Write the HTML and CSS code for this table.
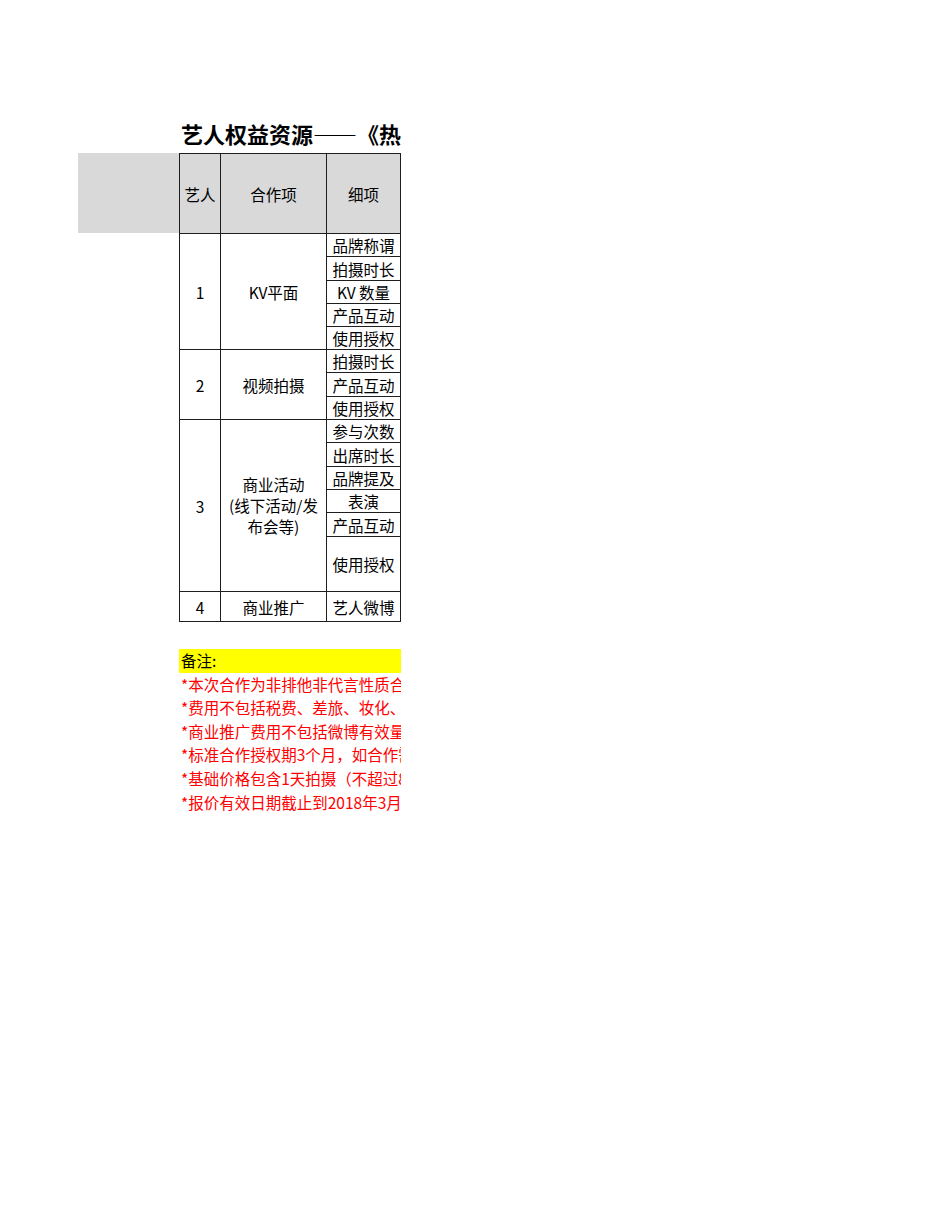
FILE: index.html
```html
<!DOCTYPE html>
<html lang="zh-CN">
<head>
<meta charset="utf-8">
<title>艺人权益资源</title>
<link rel="stylesheet" href="styles.css">
</head>
<body>
<div class="sheet">
  <div class="title">艺人权益资源——《热血街舞团》</div>
  <div class="sheet-row">
    <div class="gray-block"></div>
    <div class="grid">
      <div class="cell head">艺人</div>
      <div class="cell head">合作项</div>
      <div class="cell head">细项</div>

      <div class="cell span-a">1</div>
      <div class="cell span-a">KV平面</div>
      <div class="cell">品牌称谓</div>
      <div class="cell">拍摄时长</div>
      <div class="cell">KV 数量</div>
      <div class="cell">产品互动</div>
      <div class="cell">使用授权</div>

      <div class="cell span-b">2</div>
      <div class="cell span-b">视频拍摄</div>
      <div class="cell">拍摄时长</div>
      <div class="cell">产品互动</div>
      <div class="cell">使用授权</div>

      <div class="cell span-c">3</div>
      <div class="cell span-c multi">商业活动<br>(线下活动/发<br>布会等)</div>
      <div class="cell">参与次数</div>
      <div class="cell">出席时长</div>
      <div class="cell">品牌提及</div>
      <div class="cell">表演</div>
      <div class="cell">产品互动</div>
      <div class="cell">使用授权</div>

      <div class="cell">4</div>
      <div class="cell">商业推广</div>
      <div class="cell">艺人微博</div>
    </div>
  </div>
  <div class="notes">
    <div class="note-head">备注:</div>
    <div class="note">*本次合作为非排他非代言性质合作，不涉及品类独家</div>
    <div class="note">*费用不包括税费、差旅、妆化、造型等相关费用</div>
    <div class="note">*商业推广费用不包括微博有效量推广费用</div>
    <div class="note">*标准合作授权期3个月，如合作需延期另议</div>
    <div class="note">*基础价格包含1天拍摄（不超过8小时）</div>
    <div class="note">*报价有效日期截止到2018年3月31日</div>
  </div>
</div>
</body>
</html>
```

FILE: styles.css
```css
html, body {
  margin: 0;
  padding: 0;
  background: #ffffff;
}

body {
  font-family: "Noto Sans CJK SC", "Noto Sans", sans-serif;
  color: #000000;
}

.sheet {
  width: 401px;
  overflow: hidden;
  padding-top: 119px;
}

.title {
  margin-left: 181px;
  font-size: 22px;
  font-weight: bold;
  line-height: 28px;
  height: 28px;
  white-space: nowrap;
  margin-bottom: 6px;
}

.sheet-row {
  display: flex;
  align-items: flex-start;
}

.gray-block {
  margin-left: 78px;
  width: 101px;
  height: 80px;
  background: #d9d9d9;
  flex: none;
}

.grid {
  flex: none;
  display: grid;
  grid-template-columns: 40px 105px 73px;
  grid-template-rows: 79px 22px 23px 22px 22px 22px 22px 23px 22px 22px 23px 22px 22px 23px 54px 29px;
  gap: 1px;
  padding: 1px;
  background: #1e1e1e;
}

.cell {
  background: #ffffff;
  display: flex;
  align-items: center;
  justify-content: center;
  text-align: center;
  font-size: 15.5px;
  line-height: 20px;
  white-space: nowrap;
}

.head {
  background: #d9d9d9;
}

.span-a {
  grid-row: span 5;
}

.span-b {
  grid-row: span 3;
}

.span-c {
  grid-row: span 6;
}

.multi {
  line-height: 21px;
}

.notes {
  margin-left: 179px;
  margin-top: 27px;
  width: 222px;
}

.note-head,
.note {
  font-size: 15.5px;
  line-height: 23.6px;
  height: 23.6px;
  padding-left: 2px;
  white-space: nowrap;
}

.note-head {
  background: #ffff00;
  color: #000000;
}

.note {
  color: #ff0000;
}
```
